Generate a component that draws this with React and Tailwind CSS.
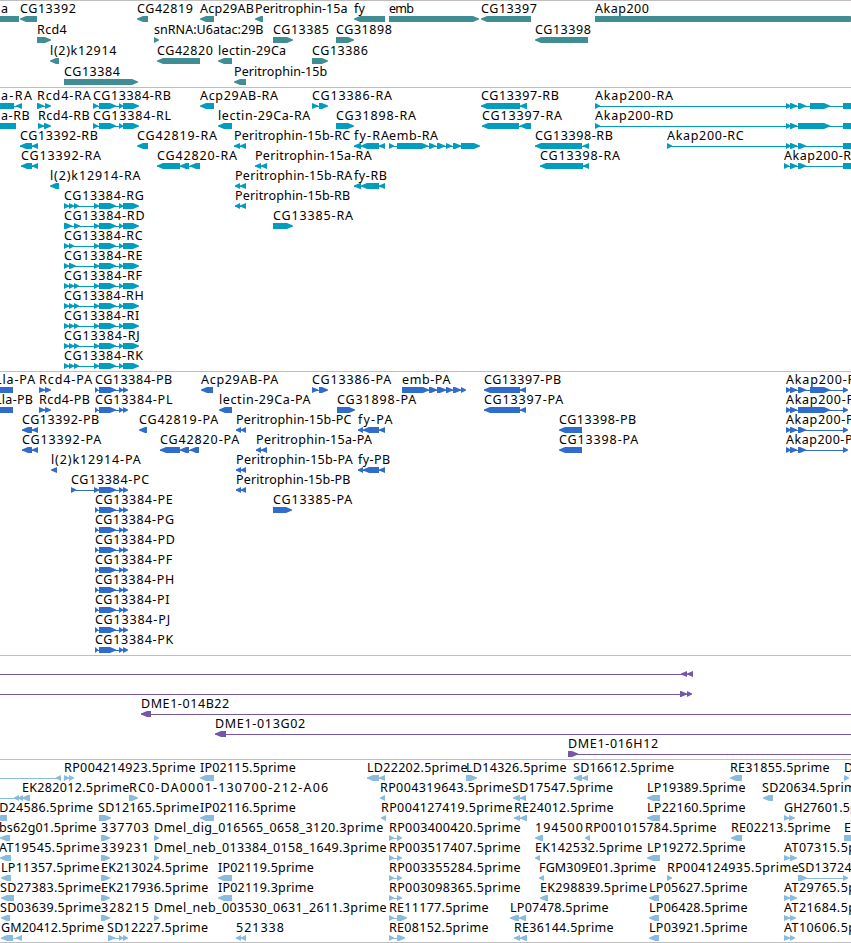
import React from "react";

// a feature is [label, strand, exons, labelX]; labelX defaults to the first exon start
const AKAP_TAIL = [[786, 791], [790, 797], [798, 806]];
const R_TAIL = [[94, 99], [99, 116], [119, 123], [123, 139]];
const P_TAIL = [[95, 98], [99, 116], [119, 123], [123, 128]];
const THREE = [[64, 69], [69, 74], [74, 79]];

const genes = [
  [
    ["a", "-", [[-20, 19]], 1],
    ["CG13392", "-", [[20, 37]]],
    ["CG42819", "-", [[137, 148]]],
    ["Acp29AB", "-", [[200, 214]]],
    ["Peritrophin-15a", "-", [[255, 263]]],
    ["fy", "-", [[354, 385]]],
    ["emb", "+", [[389, 479]]],
    ["CG13397", "-", [[481, 531]]],
    ["Akap200", "+", [[595, 856]]],
  ],
  [
    ["Rcd4", "+", [[37, 51]]],
    ["snRNA:U6atac:29B", "+", [[154, 159]]],
    ["CG13385", "+", [[273, 293]]],
    ["CG31898", "+", [[336, 354]]],
    ["CG13398", "-", [[535, 588]]],
  ],
  [
    ["l(2)k12914", "-", [[50, 59]]],
    ["CG42820", "-", [[157, 200]]],
    ["lectin-29Ca", "-", [[218, 232]]],
    ["CG13386", "+", [[312, 328]]],
  ],
  [
    ["CG13384", "+", [[64, 138]]],
    ["Peritrophin-15b", "-", [[234, 246]]],
  ],
];

const transcripts = [
  [
    ["a-RA", "-", [[-20, 14], [16, 22]], 1],
    ["Rcd4-RA", "+", [[37, 44], [45, 51]]],
    ["CG13384-RB", "+", [[93, 98], [99, 116], [119, 123], [123, 139]]],
    ["Acp29AB-RA", "-", [[200, 214]]],
    ["CG13386-RA", "+", [[312, 318], [319, 328]]],
    ["CG13397-RB", "-", [[481, 520], [520, 527]]],
    ["Akap200-RA", "+", [[595, 600], ...AKAP_TAIL, [810, 830], [843, 860]]],
  ],
  [
    ["a-RB", "-", [[-20, 16]], 1],
    ["Rcd4-RB", "+", [[38, 44], [44, 51]]],
    ["CG13384-RL", "+", [[93, 98], [99, 116], [119, 123], [123, 139]]],
    ["lectin-29Ca-RA", "-", [[218, 232]]],
    ["CG31898-RA", "+", [[336, 354]]],
    ["CG13397-RA", "-", [[482, 519], [520, 531]]],
    ["Akap200-RD", "+", [[595, 600], [786, 791], [790, 797], [798, 830], [843, 860]]],
  ],
  [
    ["CG13392-RB", "-", [[20, 32], [32, 38]]],
    ["CG42819-RA", "-", [[137, 148]]],
    ["Peritrophin-15b-RC", "-", [[234, 240], [240, 246]]],
    ["fy-RA", "-", [[354, 361], [361, 379], [379, 385]]],
    ["emb-RA", "+", [[389, 394], [397, 428], [429, 436], [437, 445], [446, 452], [453, 461], [461, 480]]],
    ["CG13398-RB", "-", [[535, 582], [583, 589]]],
    ["Akap200-RC", "+", [[667, 672], ...AKAP_TAIL, [843, 860]]],
  ],
  [
    ["CG13392-RA", "-", [[21, 32], [32, 38]]],
    ["CG42820-RA", "-", [[157, 180], [180, 189], [190, 200]]],
    ["Peritrophin-15a-RA", "-", [[255, 261], [261, 267]]],
    ["CG13398-RA", "-", [[540, 583], [583, 589]]],
    ["Akap200-RB", "+", [[784, 789], [790, 797], [798, 806], [843, 860]]],
  ],
  [
    ["l(2)k12914-RA", "-", [[50, 59]]],
    ["Peritrophin-15b-RA", "-", [[235, 240], [240, 246]]],
    ["fy-RB", "-", [[354, 361], [361, 379], [379, 385]]],
  ],
  [
    ["CG13384-RG", "+", [...THREE, ...R_TAIL]],
    ["Peritrophin-15b-RB", "-", [[235, 240], [240, 246]]],
  ],
  [
    ["CG13384-RD", "+", [[64, 72], [74, 80], ...R_TAIL]],
    ["CG13385-RA", "+", [[273, 293]]],
  ],
  [["CG13384-RC", "+", [[64, 69], [69, 74], ...R_TAIL]]],
  [["CG13384-RE", "+", [[64, 69], [69, 76], ...R_TAIL]]],
  [["CG13384-RF", "+", [...THREE, ...R_TAIL]]],
  [["CG13384-RH", "+", [...THREE, ...R_TAIL]]],
  [["CG13384-RI", "+", [...THREE, ...R_TAIL]]],
  [["CG13384-RJ", "+", [...THREE, ...R_TAIL]]],
  [["CG13384-RK", "+", [...THREE, ...R_TAIL]]],
];

const proteins = [
  [
    ["Lla-PA", "-", [[-20, 13]], -5],
    ["Rcd4-PA", "+", [[39, 45], [45, 51]]],
    ["CG13384-PB", "+", P_TAIL],
    ["Acp29AB-PA", "-", [[201, 213]]],
    ["CG13386-PA", "+", [[312, 318], [319, 328]]],
    ["emb-PA", "+", [[402, 429], [429, 437], [437, 446], [446, 453], [453, 461], [461, 466]]],
    ["CG13397-PB", "-", [[484, 520], [520, 526]]],
    ["Akap200-PA", "+", [...AKAP_TAIL, [810, 830], [843, 848]]],
  ],
  [
    ["Lla-PB", "-", [[-20, 13]], -5],
    ["Rcd4-PB", "+", [[39, 45], [45, 51]]],
    ["CG13384-PL", "+", P_TAIL],
    ["lectin-29Ca-PA", "-", [[219, 232]]],
    ["CG31898-PA", "+", [[337, 355]]],
    ["CG13397-PA", "-", [[484, 520], [520, 526]]],
    ["Akap200-PD", "+", [[786, 791], [790, 797], [798, 830], [843, 848]]],
  ],
  [
    ["CG13392-PB", "-", [[22, 32], [32, 38]]],
    ["CG42819-PA", "-", [[139, 147]]],
    ["Peritrophin-15b-PC", "-", [[236, 241], [241, 246]]],
    ["fy-PA", "-", [[358, 363], [363, 379], [379, 385]]],
    ["CG13398-PB", "-", [[559, 582]]],
    ["Akap200-PC", "+", [...AKAP_TAIL, [843, 848]]],
  ],
  [
    ["CG13392-PA", "-", [[22, 32], [32, 38]]],
    ["CG42820-PA", "-", [[160, 180], [180, 189], [190, 199]]],
    ["Peritrophin-15a-PA", "-", [[256, 261], [261, 267]]],
    ["CG13398-PA", "-", [[559, 582]]],
    ["Akap200-PB", "+", [...AKAP_TAIL, [843, 848]]],
  ],
  [
    ["l(2)k12914-PA", "-", [[51, 57]]],
    ["Peritrophin-15b-PA", "-", [[236, 241], [241, 246]]],
    ["fy-PB", "-", [[358, 363], [363, 379], [379, 385]]],
  ],
  [
    ["CG13384-PC", "+", [[71, 76], [94, 99], [99, 116], [119, 123], [123, 128]]],
    ["Peritrophin-15b-PB", "-", [[236, 241], [241, 246]]],
  ],
  [
    ["CG13384-PE", "+", P_TAIL],
    ["CG13385-PA", "+", [[273, 292]]],
  ],
  [["CG13384-PG", "+", P_TAIL]],
  [["CG13384-PD", "+", P_TAIL]],
  [["CG13384-PF", "+", P_TAIL]],
  [["CG13384-PH", "+", P_TAIL]],
  [["CG13384-PI", "+", P_TAIL]],
  [["CG13384-PJ", "+", P_TAIL]],
  [["CG13384-PK", "+", P_TAIL]],
];

const clones = [
  [["", "-", [[-20, -10], [681, 687], [687, 693]]]],
  [["", "+", [[-20, -10], [680, 687], [687, 692]]]],
  [["DME1-014B22", "-", [[141, 151], [900, 910]]]],
  [["DME1-013G02", "-", [[215, 226], [900, 910]]]],
  [["DME1-016H12", "+", [[568, 578], [900, 910]]]],
];

const ests = [
  [
    ["", "-", [[-20, -10], [56, 61]]],
    ["RP004214923.5prime", "+", [[64, 69], [69, 74]]],
    ["IP02115.5prime", "-", [[200, 214]]],
    ["LD22202.5prime", "-", [[367, 379], [379, 385]]],
    ["LD14326.5prime", "+", [[466, 477]]],
    ["SD16612.5prime", "-", [[574, 582], [582, 588]], 573],
    ["RE31855.5prime", "-", [[730, 742]]],
    ["D", "+", [[844, 849]]],
  ],
  [
    ["", "-", [[-20, -10], [14, 19], [18, 23]]],
    ["EK282012.5prime", "-", [[22, 30]]],
    ["RC0-DA0001-130700-212-A06", "+", [[129, 138]]],
    ["RP004319643.5prime", "-", [[380, 385]]],
    ["SD17547.5prime", "-", [[513, 520], [520, 526]], 512],
    ["LP19389.5prime", "-", [[647, 660]]],
    ["SD20634.5prime", "-", [[763, 773]], 762],
  ],
  [
    ["SD24586.5prime", "-", [[-5, 7]], -8],
    ["SD12165.5prime", "+", [[99, 111]], 98],
    ["IP02116.5prime", "-", [[200, 214]]],
    ["RP004127419.5prime", "-", [[381, 386]]],
    ["RE24012.5prime", "-", [[514, 520], [520, 527]]],
    ["LP22160.5prime", "-", [[647, 660]]],
    ["GH27601.5prime", "+", [[784, 789], [789, 795]]],
  ],
  [
    ["bs62g01.5prime", "-", [[0, 10]], -1],
    ["337703", "+", [[101, 110]]],
    ["Dmel_dig_016565_0658_3120.3prime", "+", [[154, 159]]],
    ["RP003400420.5prime", "+", [[389, 394], [397, 402]]],
    ["194500", "-", [[535, 543]]],
    ["RP001015784.5prime", "-", [[585, 590]]],
    ["RE02213.5prime", "-", [[731, 742]]],
    ["E", "+", [[844, 860]]],
  ],
  [
    ["AT19545.5prime", "-", [[0, 11]], -1],
    ["339231", "+", [[101, 110]]],
    ["Dmel_neb_013384_0158_1649.3prime", "+", [[154, 159]]],
    ["RP003517407.5prime", "+", [[389, 394], [397, 402]]],
    ["EK142532.5prime", "-", [[535, 540]]],
    ["LP19272.5prime", "-", [[647, 660]]],
    ["AT07315.5prime", "+", [[784, 790], [790, 797]]],
  ],
  [
    ["LP11357.5prime", "-", [[1, 11]]],
    ["EK213024.5prime", "+", [[101, 110]]],
    ["IP02119.5prime", "-", [[218, 232]]],
    ["RP003355284.5prime", "+", [[389, 394], [397, 402]]],
    ["FGM309E01.3prime", "-", [[539, 544]]],
    ["RP004124935.5prime", "+", [[667, 672]]],
    ["SD13724.5prime", "+", [[798, 807], [843, 848]]],
  ],
  [
    ["SD27383.5prime", "-", [[1, 14]], 0],
    ["EK217936.5prime", "+", [[101, 110]]],
    ["IP02119.3prime", "-", [[218, 232]]],
    ["RP003098365.5prime", "+", [[389, 394], [397, 402]]],
    ["EK298839.5prime", "-", [[540, 548]]],
    ["LP05627.5prime", "-", [[649, 659]]],
    ["AT29765.5prime", "+", [[784, 790], [790, 797]]],
  ],
  [
    ["SD03639.5prime", "-", [[1, 10]], 0],
    ["328215", "+", [[101, 110]]],
    ["Dmel_neb_003530_0631_2611.3prime", "+", [[154, 159]]],
    ["RE11177.5prime", "+", [[389, 394], [397, 407]]],
    ["LP07478.5prime", "-", [[510, 519], [519, 526]]],
    ["LP06428.5prime", "-", [[649, 659]]],
    ["AT21684.5prime", "+", [[784, 790], [790, 796]]],
  ],
  [
    ["GM20412.5prime", "-", [[1, 13], [16, 22]]],
    ["SD12227.5prime", "+", [[108, 115], [119, 123], [123, 128]], 107],
    ["521338", "-", [[236, 241], [241, 246]]],
    ["RE08152.5prime", "+", [[389, 394], [397, 405]]],
    ["RE36144.5prime", "-", [[514, 520], [520, 527]]],
    ["LP03921.5prime", "-", [[649, 659]]],
    ["AT10606.5prime", "+", [[784, 790], [790, 795]]],
  ],
];

// label advance widths, per character
const ADVANCE = {
  A: 8.8, B: 6.6, C: 7.5, D: 9.3, E: 7.2, F: 6.8, G: 8.6, H: 8.6, I: 4, J: 4.5, K: 7.8, L: 6.9,
  M: 10, N: 8.9, P: 7.3, R: 8, S: 7.4, T: 7.6, U: 8.2, "-": 7.3, _: 6.3, ".": 4, ":": 3.8,
  "(": 4.3, ")": 4.3, a: 6.8, b: 7.5, c: 6.3, d: 7.5, e: 6.7, f: 4.2, g: 7.4, h: 7.2, i: 3.1,
  k: 6.9, l: 3.1, m: 10.8, n: 7.2, o: 7.2, p: 7.5, r: 4.5, s: 6.2, t: 4.2, y: 6.8,
};

const labelWidth = (text) =>
  [...text].reduce((sum, ch) => sum + (ADVANCE[ch] ?? 7.97), 0);

const exonPoints = (x1, x2, strand) => {
  const head = Math.min(6, x2 - x1);
  if (strand === "+") {
    return `${x1},15 ${x2 - head},15 ${x2},17.5 ${x2},18.5 ${x2 - head},21 ${x1},21`;
  }
  return `${x2},15 ${x1 + head},15 ${x1},17.5 ${x1},18.5 ${x1 + head},21 ${x2},21`;
};

const Feature = ({ feature }) => {
  const [label, strand, exons, labelX] = feature;
  const start = exons[0][0];
  const end = exons[exons.length - 1][1];
  return (
    <g>
      {label && (
        <text
          x={labelX ?? start}
          y="12"
          fill="#000"
          textLength={labelWidth(label)}
          lengthAdjust="spacing"
        >
          {label}
        </text>
      )}
      {exons.length > 1 && (
        <rect x={start} y="18" width={end - start - 1} height="1" shapeRendering="crispEdges" />
      )}
      {exons.map(([x1, x2], i) => (
        <polygon key={i} points={exonPoints(x1, x2, strand)} />
      ))}
    </g>
  );
};

const Track = ({ rows, className, rowClass = "h-5" }) => (
  <div className={"flex flex-col border-t border-[#bebebe] " + className}>
    {rows.map((row, i) => (
      <svg key={i} className={"block w-full shrink-0 overflow-visible fill-current " + rowClass}>
        {row.map((feature, j) => (
          <Feature key={j} feature={feature} />
        ))}
      </svg>
    ))}
  </div>
);

const App = () => {
  return (
    <div className="w-[851px] h-[943px] overflow-hidden bg-white text-[12.5px] font-['Noto_Sans','DejaVu_Sans',sans-serif]">
      <Track rows={genes} rowClass="h-[21px]" className="pb-0.5 text-[#408e94]" />
      <Track rows={transcripts} className="pb-[3px] text-[#009dbf]" />
      <Track rows={proteins} className="pb-[3px] text-[#306ccc]" />
      <Track rows={clones} className="pb-[3px] text-[#7457a8]" />
      <Track rows={ests} className="pb-0.5 border-b text-[#88bbdd]" />
    </div>
  );
};

export default App;
